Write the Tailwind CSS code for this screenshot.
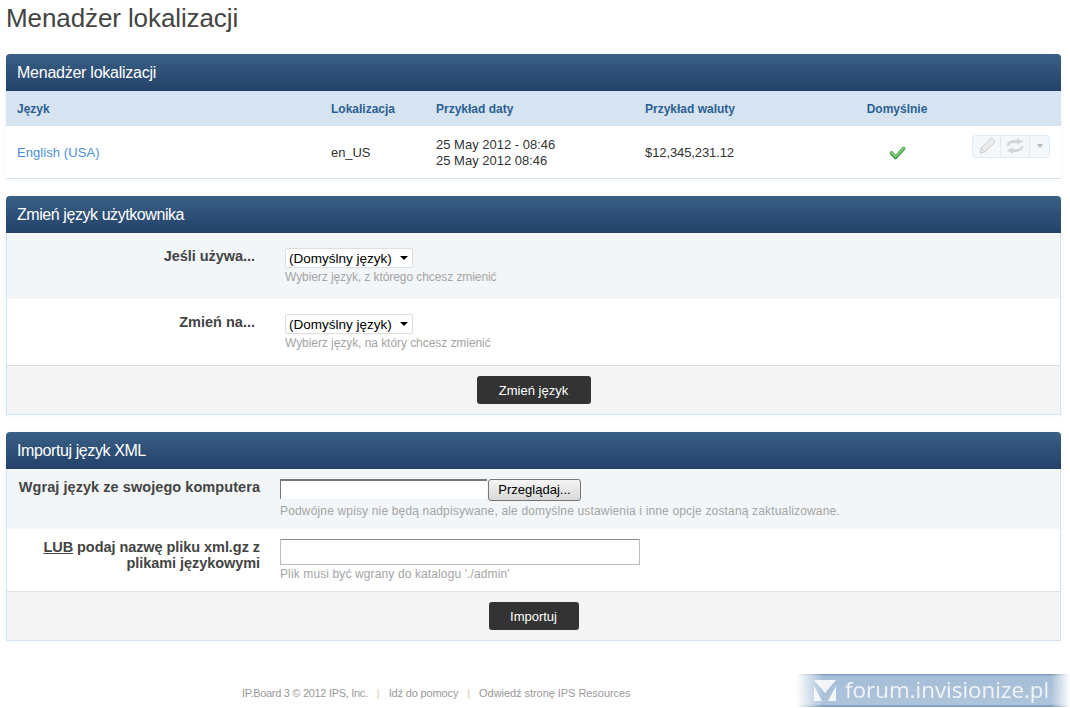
<!DOCTYPE html>
<html lang="pl">
<head>
    <meta charset="UTF-8" />
    <title>Menadżer lokalizacji</title>
    <script src="https://cdn.jsdelivr.net/npm/@tailwindcss/browser@4"></script>
</head>
<body class="bg-white font-['Liberation_Sans',Arial,sans-serif] text-[#333] h-[708px] overflow-hidden relative">
    <main class="px-[6px] pr-[9px]">
        <h1 class="text-[26px] tracking-[-0.1px] leading-[30px] pt-[3px] h-[54px] text-[#444]">Menadżer lokalizacji</h1>

        <section class="border border-t-0 border-[#d5e2ef] rounded-t-[4px] shadow-[0_0_6px_rgba(0,0,0,0.05)] mb-[17px]">
            <h2 class="h-[37px] -mx-px px-[11px] pt-px flex items-center text-white text-[16px] tracking-[-0.25px] rounded-t-[4px] bg-gradient-to-b from-[#3a5f85] to-[#234269]">Menadżer lokalizacji</h2>
            <div class="grid grid-cols-[314px_105px_209px_193px_118px_1fr] h-[35px] items-center bg-[#d6e3f0] text-[12px] font-bold text-[#2c6093] pl-[11px] -ml-px -mr-px">
                <div>Język</div>
                <div>Lokalizacja</div>
                <div>Przykład daty</div>
                <div>Przykład waluty</div>
                <div class="text-center">Domyślnie</div>
                <div></div>
            </div>
            <div class="grid grid-cols-[314px_105px_209px_193px_118px_1fr] h-[52px] items-center text-[13px] pl-[11px] -ml-px -mr-px bg-white pt-px">
                <div><a href="#" class="text-[#4a8fd8] tracking-[0.07px]">English (USA)</a></div>
                <div class="tracking-[-0.1px]">en_US</div>
                <div class="text-[13px] leading-[16px]">25 May 2012 - 08:46<br />25 May 2012 08:46</div>
                <div class="tracking-[-0.1px]">$12,345,231.12</div>
                <div class="flex justify-center">
                    <svg width="17" height="14" viewBox="0 0 17 14" fill="none" stroke-linecap="round" stroke-linejoin="round"><path d="M2.500 7l4 4.500L14.500 2.500" stroke="#47944a" stroke-width="3.600"/><path d="M2.500 6.500l4 4L14.500 2" stroke="#7fcb78" stroke-width="2"/></svg>
                </div>
                <div class="flex justify-end pr-[11px]">
                    <div class="flex h-[23px] border border-[#deeaf4] rounded-[4px] bg-[#f5f8fa] -mt-[13px]">
                        <span class="w-[28px] flex items-center justify-center border-r border-[#deeaf4]">
                            <svg width="18" height="18" viewBox="0 0 18 18"><path d="M2 16l1-5L12.500 1.500a1.500 1.500 0 0 1 2 0l2 2a1.500 1.500 0 0 1 0 2L7 15z" fill="#eaeaea" stroke="#cdcdcd" stroke-width="1"/><path d="M3 11l4 4" stroke="#cdcdcd" fill="none"/></svg>
                        </span>
                        <span class="w-[29px] flex items-center justify-center border-r border-[#deeaf4]">
                            <svg width="18" height="16" viewBox="0 0 18 16" fill="none" stroke="#d6d6d6" stroke-width="3"><path d="M2 8c0-3 3-4.500 6-4.500h4M16 8c0 3-3 4.500-6 4.500H6"/><path d="M11 0l6 3.500L11 7zM7 9l-6 3.500L7 16z" fill="#d6d6d6" stroke="none"/></svg>
                        </span>
                        <span class="w-[19px] flex items-center justify-center">
                            <span class="border-x-[3.500px] border-t-[4px] border-x-transparent border-t-[#bbb]"></span>
                        </span>
                    </div>
                </div>
            </div>
        </section>

        <section class="border border-t-0 border-[#d5e2ef] rounded-t-[4px] shadow-[0_0_6px_rgba(0,0,0,0.05)] mb-[17px]">
            <h2 class="h-[37px] -mx-px px-[11px] pt-px flex items-center text-white text-[16px] tracking-[-0.43px] rounded-t-[4px] bg-gradient-to-b from-[#3a5f85] to-[#234269]">Zmień język użytkownika</h2>
            <div class="flex h-[66px] bg-[#f3f6f9] pt-[15px]">
                <label class="w-[248px] text-right text-[14.500px] tracking-[-0.05px] font-bold text-[#444] leading-[16px]">Jeśli używa...</label>
                <div class="ml-[30px]">
                    <div class="relative w-[128px] h-[20px]">
                        <select class="block appearance-none w-full h-full bg-white border border-[#ddd] rounded-[2px] pl-[3px] text-[13.500px] text-black"><option>(Domyślny język)</option></select>
                        <span class="absolute right-[5px] top-[8px] border-x-[4px] border-t-[4px] border-x-transparent border-t-black"></span>
                    </div>
                    <p class="text-[12px] tracking-[-0.08px] text-[#a4a4a4] leading-[15px] mt-[2px]">Wybierz język, z którego chcesz zmienić</p>
                </div>
            </div>
            <div class="flex h-[66px] bg-white pt-[15px]">
                <label class="w-[248px] text-right text-[14.500px] font-bold text-[#444] leading-[16px]">Zmień na...</label>
                <div class="ml-[30px]">
                    <div class="relative w-[128px] h-[20px]">
                        <select class="block appearance-none w-full h-full bg-white border border-[#ddd] rounded-[2px] pl-[3px] text-[13.500px] text-black"><option>(Domyślny język)</option></select>
                        <span class="absolute right-[5px] top-[8px] border-x-[4px] border-t-[4px] border-x-transparent border-t-black"></span>
                    </div>
                    <p class="text-[12px] tracking-[-0.06px] text-[#a4a4a4] leading-[15px] mt-[2px]">Wybierz język, na który chcesz zmienić</p>
                </div>
            </div>
            <div class="h-[49px] bg-[#f4f4f4] border-t border-[#d9dfe5] flex items-center justify-center">
                <button class="w-[114px] h-[28px] pt-px rounded-[3px] bg-[#333] text-white text-[13px]">Zmień język</button>
            </div>
        </section>

        <section class="border border-t-0 border-[#d5e2ef] rounded-t-[4px] shadow-[0_0_6px_rgba(0,0,0,0.05)]">
            <h2 class="h-[37px] -mx-px px-[11px] pt-px flex items-center text-white text-[16px] tracking-[-0.4px] rounded-t-[4px] bg-gradient-to-b from-[#3a5f85] to-[#234269]">Importuj język XML</h2>
            <div class="flex h-[60px] bg-[#f3f6f9] pt-[10px]">
                <label class="w-[253px] text-right text-[14.500px] tracking-[0.06px] font-bold text-[#444] leading-[16px]">Wgraj język ze swojego komputera</label>
                <div class="ml-[20px]">
                    <div class="flex h-[21px] items-start">
                        <div class="w-[207px] h-[20px] bg-white border-t-2 border-l border-[#777]"></div>
                        <button class="ml-px w-[93px] h-[22px] rounded-[3px] border border-[#777] bg-gradient-to-b from-[#f5f5f5] to-[#d8d8d8] text-[13px] text-black">Przeglądaj...</button>
                    </div>
                    <p class="text-[12px] tracking-[0.16px] text-[#a4a4a4] leading-[15px] mt-[4px] whitespace-nowrap">Podwójne wpisy nie będą nadpisywane, ale domyślne ustawienia i inne opcje zostaną zaktualizowane.</p>
                </div>
            </div>
            <div class="flex h-[62px] bg-white pt-[10px]">
                <label class="w-[253px] pl-[10px] text-right text-[14.500px] tracking-[-0.06px] font-bold text-[#444] leading-[16px]"><span class="underline">LUB</span> podaj nazwę pliku xml.gz z plikami językowymi</label>
                <div class="ml-[20px]">
                    <input type="text" class="block w-[360px] h-[26px] bg-white border border-[#bbb] border-t-[#888] rounded-[1px]" />
                    <p class="text-[12px] tracking-[0.12px] text-[#a4a4a4] leading-[15px] mt-[2px]">Plik musi być wgrany do katalogu './admin'</p>
                </div>
            </div>
            <div class="h-[49px] bg-[#f4f4f4] border-t border-[#d9dfe5] flex items-center justify-center">
                <button class="w-[90px] h-[28px] pt-px rounded-[3px] bg-[#333] text-white text-[13px]">Importuj</button>
            </div>
        </section>

        <footer class="h-[67px] flex items-start pt-[45px] pl-[236px] text-[11px] leading-[14px] text-[#999] whitespace-nowrap">
            <span class="tracking-[-0.3px]">IP.Board 3 © 2012 IPS, Inc.</span>
            <span class="mx-[9px] text-[#e0c9a4]">|</span>
            <a href="#" class="tracking-[-0.15px]">Idź do pomocy</a>
            <span class="mx-[9px] text-[#e0c9a4]">|</span>
            <a href="#" class="tracking-[-0.05px]">Odwiedź stronę IPS Resources</a>
        </footer>
    </main>

    <div class="absolute left-[796px] top-[674px] w-[274px] h-[33px] flex items-center pl-[18px] gap-[9px] bg-[linear-gradient(to_bottom,#6f8fb0,#a5bdd7_2px,#aec4db_30px,#6f8fb0)] [mask-image:linear-gradient(to_right,transparent,black_10%,black_93%,transparent)]">
        <svg class="shrink-0" width="22" height="22" viewBox="0 0 22 22" fill="#f2f6fa"><path d="M0 0h22L11 13z"/><path d="M0 6l8 15H0zM22 6l-8 15h8z"/></svg>
        <span class="text-[22.400px] leading-none text-[#f0f4f8] font-['Open_Sans',sans-serif]">forum.invisionize.pl</span>
    </div>
</body>
</html>
